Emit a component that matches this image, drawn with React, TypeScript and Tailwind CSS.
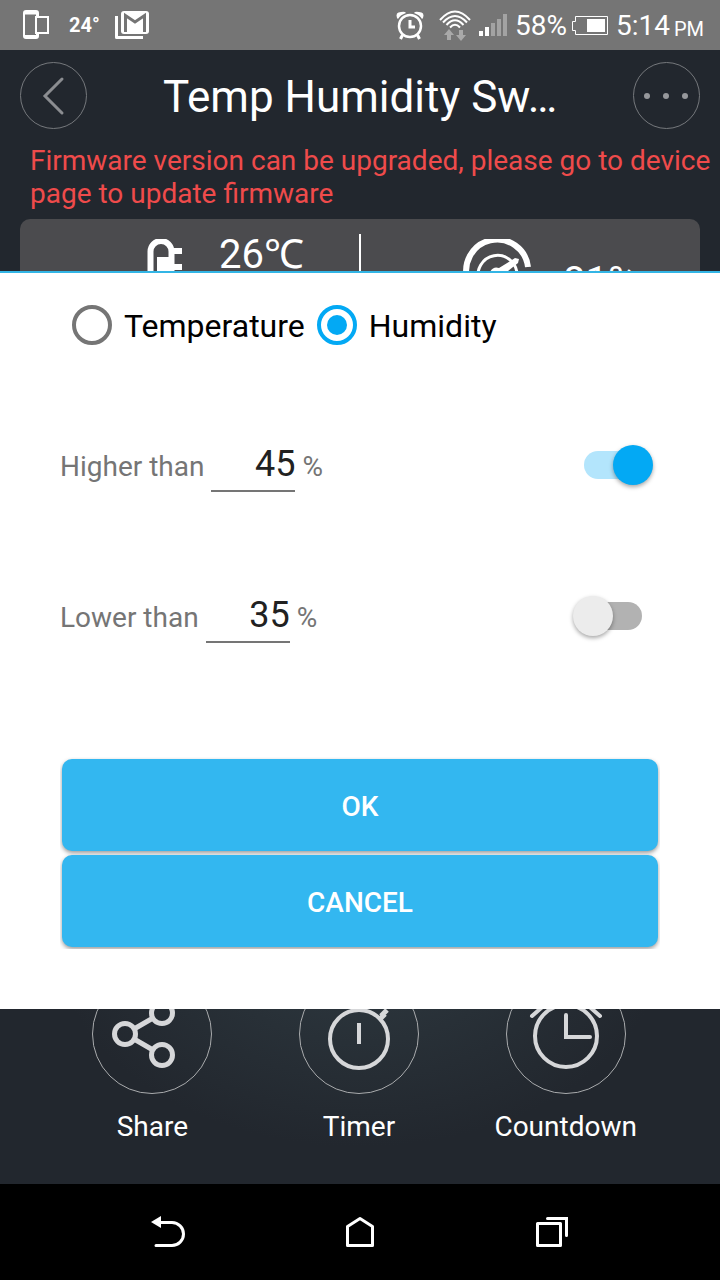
import { useState } from 'react';
import type { ReactNode } from 'react';

function StatusBar() {
  return (
    <div className="flex h-[50px] items-center justify-between bg-[#757575] pl-[22px] pr-4 text-white">
      <div className="flex items-center">
        <svg className="h-[30px] w-7" viewBox="0 0 28 30" fill="none" aria-hidden="true">
          <path
            fill="#fff"
            fillRule="evenodd"
            d="M4 0h10q3 0 3 3v3h-3V4.500H3V25h11v-1h3v2q0 3-3 3H4q-3 0-3-3V3q0-3 3-3z"
          />
          <rect x="14" y="7" width="12" height="16" stroke="#fff" strokeWidth="2" />
        </svg>
        <span className="ml-[19px] text-xl font-bold">24°</span>
        <svg className="ml-3.5 h-[30px] w-9" viewBox="0 0 36 30" fill="none" aria-hidden="true">
          <path d="M2.500 6v21.500H29" stroke="#fff" strokeWidth="3" strokeLinejoin="round" />
          <rect x="7" y="1" width="28" height="23" rx="3" fill="#fff" />
          <path d="M11.500 22V5.500L21 12l9.500-6.500V22" stroke="#757575" strokeWidth="3" />
        </svg>
      </div>
      <div className="flex items-center text-[28px]">
        <svg className="h-[30px] w-[30px]" viewBox="0 0 30 30" fill="none" stroke="#fff" aria-hidden="true">
          <circle cx="15" cy="16" r="11" strokeWidth="2.500" />
          <path d="M15 10v7h5" strokeWidth="3" />
          <path d="M7.500 25l-2 4M22.500 25l2 4" strokeWidth="3" />
          <path d="M2 8Q0 2 6 2q4-1 5 1-6 2-8 6zM28 8q2-6-4-6-4-1-5 1 6 2 8 6z" fill="#fff" stroke="none" />
        </svg>
        <svg className="ml-3.5 h-8 w-8" viewBox="0 0 32 32" fill="none" aria-hidden="true">
          <g stroke="#fff" strokeWidth="2">
            <path d="M1 11Q16-6 31 11" />
            <path d="M4 13.500q12-13 24 0" />
            <path d="M7.500 16q8.500-9.500 17 0" />
            <path d="M11 18.500q5-5.500 10 0" />
          </g>
          <path fill="#a9a9a9" d="M10 20l5 6h-3v5H8v-5H5zM22 32l-5-6h3v-5h4v5h3z" />
        </svg>
        <svg className="ml-2 h-[22px] w-7" viewBox="0 0 28 22" aria-hidden="true">
          <path fill="#fff" d="M0 17h4v5H0zM6 13h4v9H6z" />
          <path fill="#a3a3a3" d="M12 9h4v13h-4zM18 5h4v17h-4zM24 0h4v22h-4z" />
        </svg>
        <span className="ml-2 pt-0.5">58%</span>
        <svg className="ml-[5px] h-5 w-9" viewBox="0 0 36 20" fill="none" aria-hidden="true">
          <path d="M3.500 1.500h32v18h-32v-4h-3v-9h3z" stroke="#fff" />
          <path d="M15 4h18v13H15z" fill="#fff" />
        </svg>
        <span className="ml-2 pt-0.5">5:14</span>
        <span className="ml-1 pt-2 text-xl">PM</span>
      </div>
    </div>
  );
}

function Header() {
  return (
    <header className="flex items-center justify-between px-5 pt-3 pb-[15px]">
      <button
        type="button"
        aria-label="Back"
        className="flex size-[67px] items-center justify-center rounded-full border border-[#75787c]"
      >
        <svg className="h-10 w-6" viewBox="0 0 24 40" fill="none" aria-hidden="true">
          <path d="M20 3L3 20l17 17" stroke="#8b8d91" strokeWidth="3" strokeLinecap="round" />
        </svg>
      </button>
      <h1 className="pt-0.5 text-[44px] leading-[52px] text-white">Temp Humidity Sw…</h1>
      <button
        type="button"
        aria-label="More"
        className="flex size-[67px] items-center justify-center rounded-full border border-[#75787c]"
      >
        <svg className="h-2 w-11" viewBox="0 0 44 8" fill="#96989c" aria-hidden="true">
          <circle cx="3" cy="4" r="3" />
          <circle cx="22" cy="4" r="3" />
          <circle cx="41" cy="4" r="3" />
        </svg>
      </button>
    </header>
  );
}

function Readings() {
  return (
    <section className="mx-5 mt-[9px] grid h-[52px] grid-cols-2 overflow-hidden rounded-t-[10px] bg-[#4b4b4e] text-[40px] leading-[48px] text-white">
      <div className="flex items-start pl-[127px]">
        <svg className="mt-5 h-16 w-9 shrink-0" viewBox="0 0 36 64" fill="none" aria-hidden="true">
          <path d="M3.500 50V12.500a10.500 10.500 0 0 1 21 0V50" stroke="#fff" strokeWidth="6" />
          <path d="M10 18h14v32H10z" fill="#fff" />
          <path d="M24 9h11v6H24zM24 25h11v6H24zM24 41h11v6H24z" fill="#fff" />
        </svg>
        <span className="ml-9 mt-3">26℃</span>
      </div>
      <div className="flex items-start">
        <span className="-ml-px mt-[15px] h-20 w-0.5 bg-white" />
        <svg className="ml-[102px] mt-5 h-[70px] w-[70px] shrink-0" viewBox="0 0 70 70" fill="none" aria-hidden="true">
          <path d="M5 42A31 31 0 1 1 65 28" stroke="#fff" strokeWidth="6" />
          <path d="M16 42A19.500 19.500 0 1 1 54 35" stroke="#fff" strokeWidth="3" />
          <path d="M27 33q3-6 9-4l16-10 4 1-1 4-15 12q-3 6-9 4z" fill="#fff" />
        </svg>
        <span className="ml-[30px] mt-[39px]">81%</span>
      </div>
    </section>
  );
}

function Radio({ label, checked, onChange }: { label: string; checked: boolean; onChange: () => void }) {
  return (
    <label className="flex h-10 items-center gap-3 text-[32px] leading-10 text-black">
      <input
        type="radio"
        name="sensor"
        checked={checked}
        onChange={onChange}
        className="size-10 appearance-none rounded-full border-4 border-[#757575] bg-clip-content p-1.5 checked:border-[#03a9f4] checked:bg-[#03a9f4]"
      />
      <span className="pt-0.5">{label}</span>
    </label>
  );
}

function Threshold({ id, label, value, on }: { id: string; label: string; value: string; on: boolean }) {
  return (
    <div className="flex items-center justify-between pl-[60px] pr-[67px]">
      <div className="flex items-baseline gap-[7px] text-[28px] text-[#757575]">
        <label htmlFor={id}>{label}</label>
        <input
          id={id}
          type="text"
          inputMode="numeric"
          defaultValue={value}
          className="h-[50px] w-[84px] border-b-2 border-[#757575] pb-1 text-right text-[36px] leading-[44px] text-[#212121] outline-none"
        />
        <span>%</span>
      </div>
      <input
        type="checkbox"
        role="switch"
        aria-label={label}
        defaultChecked={on}
        className="mb-1 grid h-10 w-20 appearance-none items-center before:col-start-1 before:row-start-1 before:mx-[11px] before:h-7 before:rounded-full before:bg-[#b2b2b2] after:col-start-1 after:row-start-1 after:size-10 after:rounded-full after:bg-[#ececec] after:shadow-[0_2px_4px_rgba(0,0,0,0.35)] checked:before:bg-[#b3e5fc] checked:after:justify-self-end checked:after:bg-[#03a9f4]"
      />
    </div>
  );
}

function DialogButton({ children }: { children: ReactNode }) {
  return (
    <button
      type="button"
      className="h-[92px] rounded-[10px] bg-[#33b7f0] pt-1 text-[28px] font-medium text-white shadow-[0_2px_4px_rgba(0,0,0,0.4)]"
    >
      {children}
    </button>
  );
}

function ConditionDialog() {
  const [sensor, setSensor] = useState('humidity');

  return (
    <div role="dialog" aria-label="Condition" className="border-t-2 border-[#33b5e5] bg-white pt-8 pb-[60px]">
      <div className="flex gap-3 pl-[72px]">
        <Radio label="Temperature" checked={sensor === 'temperature'} onChange={() => setSensor('temperature')} />
        <Radio label="Humidity" checked={sensor === 'humidity'} onChange={() => setSensor('humidity')} />
      </div>
      <div className="flex flex-col gap-[101px] pt-[97px] pb-[114px]">
        <Threshold id="higher" label="Higher than" value="45" on />
        <Threshold id="lower" label="Lower than" value="35" on={false} />
      </div>
      <div className="mx-[60px] flex flex-col gap-1 overflow-hidden p-0.5">
        <DialogButton>OK</DialogButton>
        <DialogButton>CANCEL</DialogButton>
      </div>
    </div>
  );
}

function Action({ label, children }: { label: string; children: ReactNode }) {
  return (
    <button type="button" className="flex flex-col items-center gap-4 text-[28px] leading-[33px] text-white">
      <span className="flex size-[120px] items-center justify-center rounded-full border border-[#a9abad]">
        <svg className="size-20" viewBox="0 0 80 80" fill="none" stroke="#d6d7d9" aria-hidden="true">
          {children}
        </svg>
      </span>
      {label}
    </button>
  );
}

function Actions() {
  return (
    <div className="flex h-[175px] flex-col justify-end overflow-hidden bg-[radial-gradient(ellipse_at_50%_-40%,#2e3940_0%,#22272e_60%)] pr-[51px] pl-[49px] pb-[41px]">
      <div className="grid grid-cols-3">
        <Action label="Share">
          <g strokeWidth="5">
            <circle cx="13" cy="40" r="10.500" />
            <circle cx="50" cy="19" r="10.500" />
            <circle cx="50" cy="61" r="10.500" />
            <path d="M22 35l19-11M22 45l19 11" />
          </g>
        </Action>
        <Action label="Timer">
          <circle cx="40" cy="45" r="29" strokeWidth="4" />
          <path d="M40 29v21" strokeWidth="4" />
          <path d="M60 26l6-6M62 22l6-6" strokeWidth="5" />
          <path d="M30 8h20M40 8v8" strokeWidth="4" />
        </Action>
        <Action label="Countdown">
          <g strokeWidth="4" strokeLinecap="round">
            <circle cx="40" cy="42" r="31" />
            <path d="M40 21v22h24" />
            <path d="M6 22L22 8M74 22L58 8" />
          </g>
        </Action>
      </div>
    </div>
  );
}

function NavBar() {
  return (
    <nav className="grid h-24 grid-cols-3 place-items-center bg-black px-[72px]">
      <button type="button" aria-label="Back">
        <svg className="h-8 w-[34px]" viewBox="0 0 34 32" fill="none" aria-hidden="true">
          <path d="M0 6l10-6v12z" fill="#fff" />
          <path d="M9 6.500h12a11.500 11.500 0 0 1 0 23H5" stroke="#fff" strokeWidth="3" strokeLinecap="round" />
        </svg>
      </button>
      <button type="button" aria-label="Home">
        <svg className="h-8 w-7" viewBox="0 0 28 32" fill="none" aria-hidden="true">
          <path d="M1.500 29.500v-19L14 2.500l12.500 8v19z" stroke="#fff" strokeWidth="3" strokeLinejoin="round" />
        </svg>
      </button>
      <button type="button" aria-label="Recent apps">
        <svg className="size-8" viewBox="0 0 32 32" fill="none" stroke="#fff" aria-hidden="true">
          <rect x="1.500" y="7.500" width="23" height="22" strokeWidth="3" strokeLinejoin="round" />
          <path d="M11.500 2.500h19v17" strokeWidth="3" strokeLinecap="round" />
        </svg>
      </button>
    </nav>
  );
}

function App() {
  return (
    <div className="flex min-h-screen flex-col bg-[#22272e] font-['Roboto',sans-serif]">
      <StatusBar />
      <Header />
      <p className="pl-[30px] pr-1 text-[28px] leading-[33px] text-[#ef4b4b]">
        Firmware version can be upgraded, please go to device page to update firmware
      </p>
      <Readings />
      <ConditionDialog />
      <Actions />
      <NavBar />
    </div>
  );
}

export default App;
